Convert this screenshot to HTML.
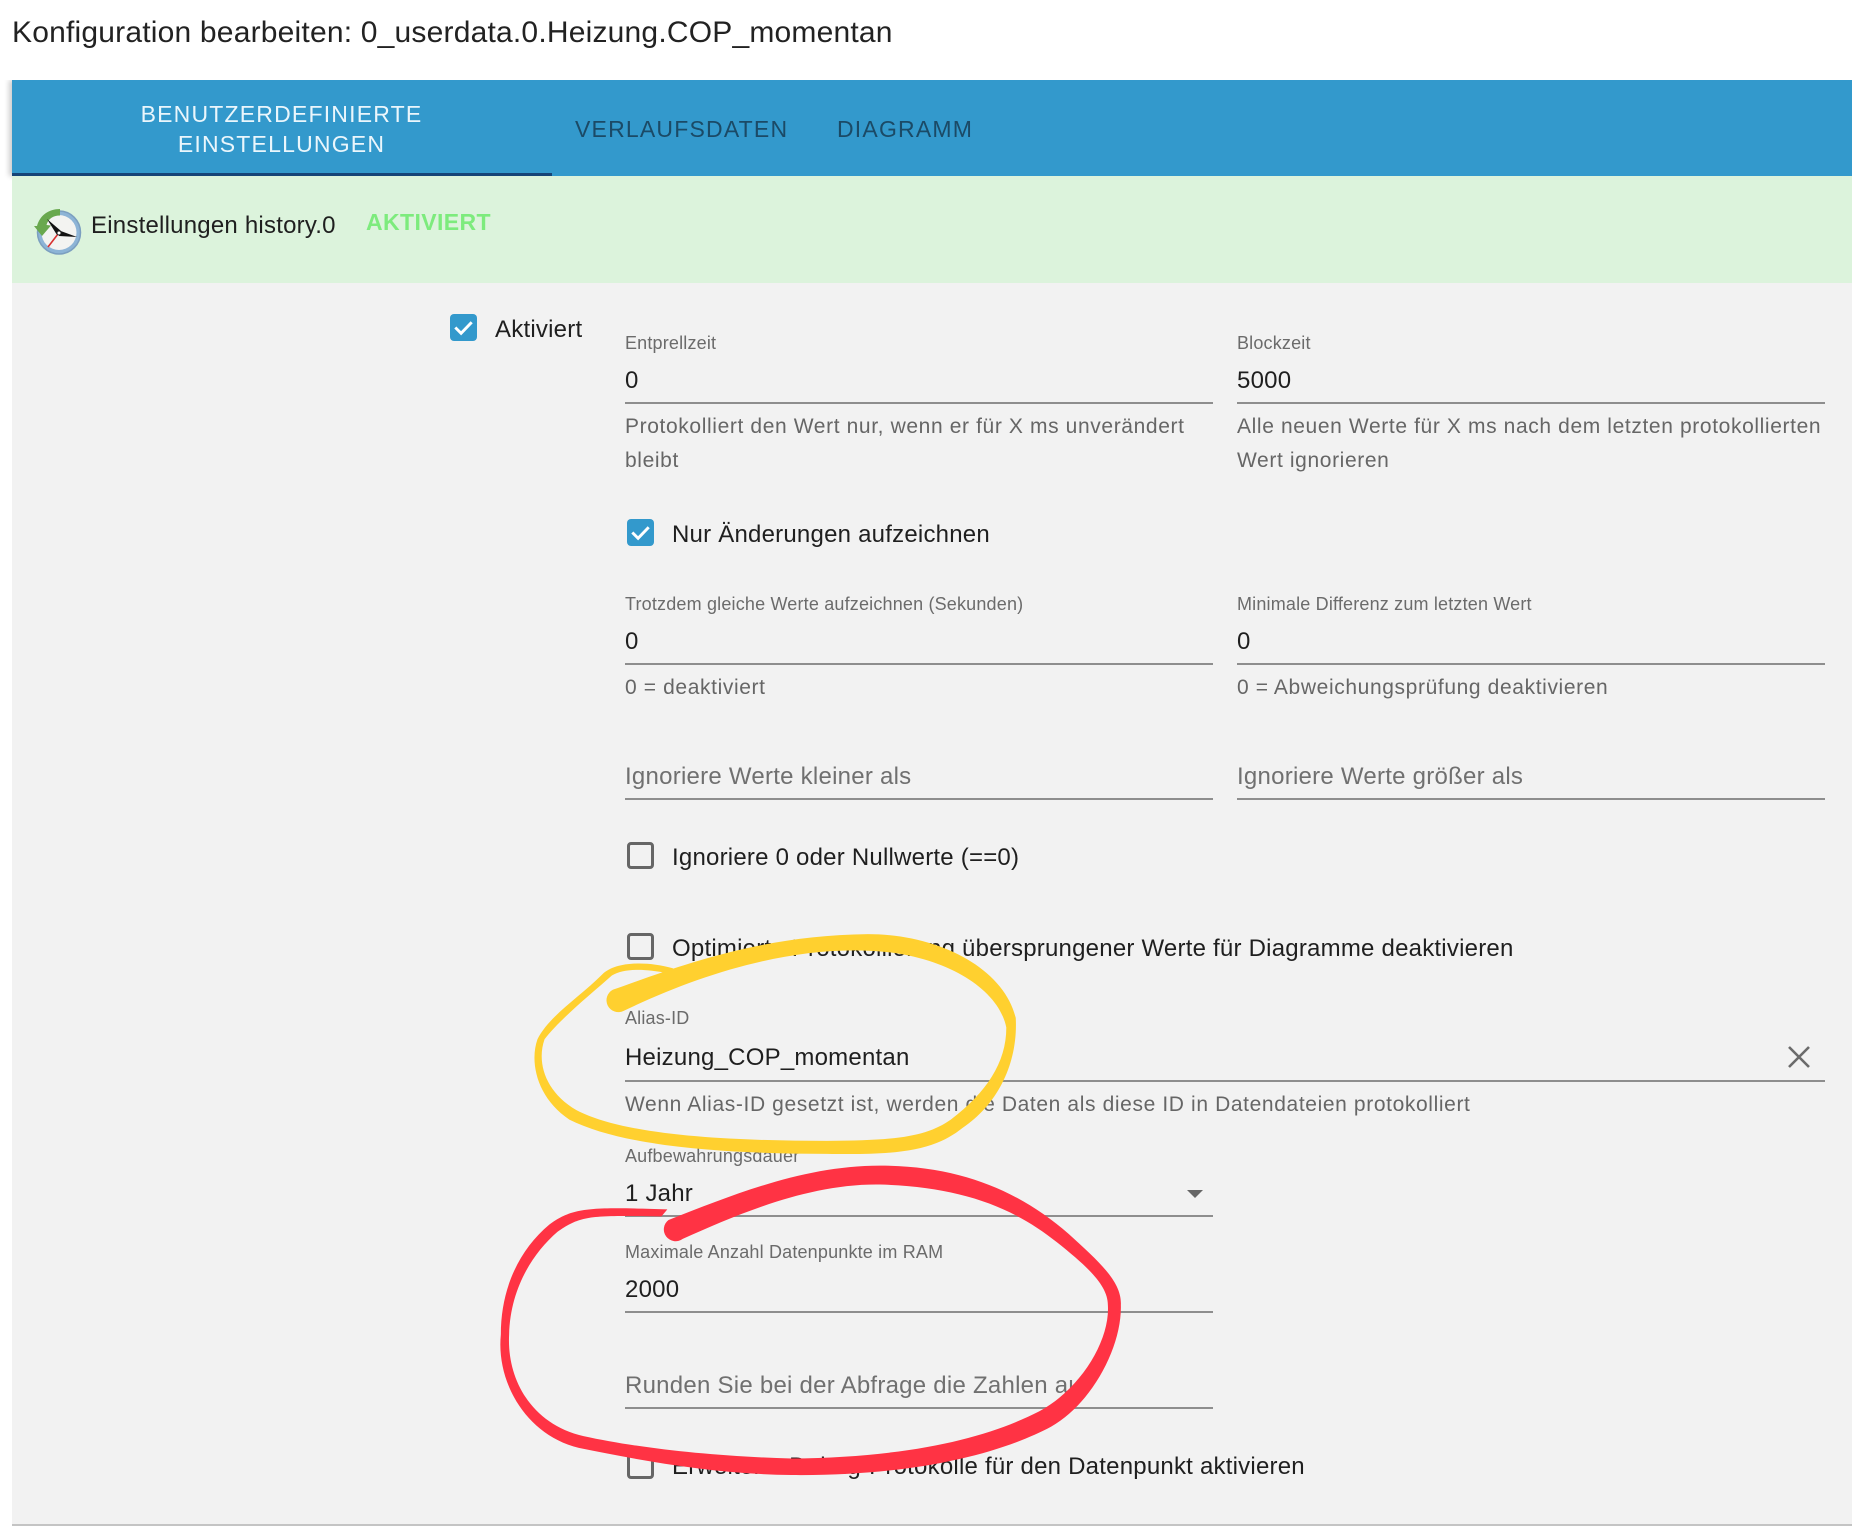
<!DOCTYPE html>
<html lang="de">
<head>
<meta charset="utf-8">
<title>Konfiguration bearbeiten</title>
<style>
html,body{margin:0;padding:0;background:#fff}
body{position:relative;width:1852px;height:1540px;overflow:hidden;font-family:"Liberation Sans",sans-serif;color:#222}
div{position:absolute}
.t{white-space:nowrap;line-height:1}
.v{font-size:24px;color:#1f1f1f;letter-spacing:.22px}
.l{font-size:18px;color:#6b6b6b;letter-spacing:.18px}
.h{font-size:21px;letter-spacing:.62px;color:#666}
.p{font-size:24px;color:#707070;letter-spacing:.25px}
.ln{height:2px;background:#8e8e8e}
.cb{width:27px;height:27px;background:#3399cc;border-radius:4px}
.ub{width:21px;height:21px;border:3px solid #666;border-radius:4px}
.tab{font-size:23px;letter-spacing:1.2px}
svg{position:absolute}
</style>
</head>
<body>
<div class="t" style="left:12px;top:18px;font-size:30px;letter-spacing:.2px;color:#222">Konfiguration bearbeiten: 0_userdata.0.Heizung.COP_momentan</div>

<div style="left:12px;top:80px;width:1840px;height:96px;background:#3399cc"></div>
<div style="left:12px;top:80px;width:540px;height:96px;box-shadow:-3px 0 5px rgba(0,0,0,.2);clip-path:inset(0 540px -5px -8px)"></div>
<div style="left:12px;top:173px;width:540px;height:3px;background:#164477"></div>
<div class="t tab" style="left:12px;width:539px;text-align:center;top:103px;color:#eaf6fc">BENUTZERDEFINIERTE</div>
<div class="t tab" style="left:12px;width:539px;text-align:center;top:133px;color:#eaf6fc">EINSTELLUNGEN</div>
<div class="t tab" style="left:575px;top:118px;color:#1b4a66">VERLAUFSDATEN</div>
<div class="t tab" style="left:837px;top:118px;color:#1b4a66">DIAGRAMM</div>

<div style="left:12px;top:176px;width:1840px;height:107px;background:#dcf3dc"></div>
<div style="left:12px;top:283px;width:1840px;height:1242px;background:#f2f2f2"></div>
<div style="left:12px;top:1524px;width:1840px;height:2px;background:#c4c4c4"></div>

<svg style="left:33px;top:206px" width="50" height="50" viewBox="0 0 50 50">
<circle cx="26" cy="26.500" r="21.500" fill="#8db4d6" stroke="#7c9fc0" stroke-width="1.500"/>
<circle cx="26" cy="26.500" r="17.500" fill="#f3f3f1"/>
<path d="M4 20 C7 9 16 3 27 3 L27 9.500 C20 9.500 15 13 13.500 19 L18 19.500 L9 30 L1 20 Z" fill="#69a84e"/>
<path d="M14 13 L28 25 L24 29 Z" fill="#111"/>
<path d="M25 24 L44 31 L26 30 Z" fill="#111"/>
<path d="M25 28 L15 41" stroke="#d83030" stroke-width="1.600"/>
<circle cx="26" cy="27" r="2" fill="#fff" stroke="#222"/>
</svg>
<div class="t v" style="left:91px;top:214px">Einstellungen history.0</div>
<div class="t" style="left:366px;top:211px;font-size:23px;font-weight:bold;color:#7deb7d;letter-spacing:.4px">AKTIVIERT</div>

<div class="cb" style="left:450px;top:314px"></div>
<svg style="left:450px;top:314px" width="27" height="27" viewBox="0 0 28 28"><path d="M5.500 14 L11.500 20 L22.500 8.500" fill="none" stroke="#fff" stroke-width="3"/></svg>
<div class="t v" style="left:495px;top:318px">Aktiviert</div>

<div class="t l" style="left:625px;top:334px">Entprellzeit</div>
<div class="t v" style="left:625px;top:369px">0</div>
<div class="ln" style="left:625px;top:402px;width:588px"></div>
<div class="t h" style="left:625px;top:416px">Protokolliert den Wert nur, wenn er für X ms unverändert</div>
<div class="t h" style="left:625px;top:450px">bleibt</div>

<div class="t l" style="left:1237px;top:334px">Blockzeit</div>
<div class="t v" style="left:1237px;top:369px">5000</div>
<div class="ln" style="left:1237px;top:402px;width:588px"></div>
<div class="t h" style="left:1237px;top:416px">Alle neuen Werte für X ms nach dem letzten protokollierten</div>
<div class="t h" style="left:1237px;top:450px">Wert ignorieren</div>

<div class="cb" style="left:627px;top:519px"></div>
<svg style="left:627px;top:519px" width="27" height="27" viewBox="0 0 28 28"><path d="M5.500 14 L11.500 20 L22.500 8.500" fill="none" stroke="#fff" stroke-width="3"/></svg>
<div class="t v" style="left:672px;top:523px">Nur Änderungen aufzeichnen</div>

<div class="t l" style="left:625px;top:595px">Trotzdem gleiche Werte aufzeichnen (Sekunden)</div>
<div class="t v" style="left:625px;top:630px">0</div>
<div class="ln" style="left:625px;top:663px;width:588px"></div>
<div class="t h" style="left:625px;top:677px">0 = deaktiviert</div>

<div class="t l" style="left:1237px;top:595px">Minimale Differenz zum letzten Wert</div>
<div class="t v" style="left:1237px;top:630px">0</div>
<div class="ln" style="left:1237px;top:663px;width:588px"></div>
<div class="t h" style="left:1237px;top:677px">0 = Abweichungsprüfung deaktivieren</div>

<div class="t p" style="left:625px;top:765px">Ignoriere Werte kleiner als</div>
<div class="ln" style="left:625px;top:798px;width:588px"></div>
<div class="t p" style="left:1237px;top:765px">Ignoriere Werte größer als</div>
<div class="ln" style="left:1237px;top:798px;width:588px"></div>

<div class="ub" style="left:627px;top:842px"></div>
<div class="t v" style="left:672px;top:846px">Ignoriere 0 oder Nullwerte (==0)</div>

<div class="ub" style="left:627px;top:933px"></div>
<div class="t v" style="left:672px;top:937px">Optimierte Protokollierung übersprungener Werte für Diagramme deaktivieren</div>

<div class="t l" style="left:625px;top:1009px">Alias-ID</div>
<div class="t v" style="left:625px;top:1046px">Heizung_COP_momentan</div>
<div class="ln" style="left:625px;top:1080px;width:1200px"></div>
<svg style="left:1786px;top:1044px" width="26" height="26" viewBox="0 0 26 26"><path d="M3 3 L23 23 M23 3 L3 23" stroke="#6b6b6b" stroke-width="2.600" fill="none"/></svg>
<div class="t h" style="left:625px;top:1094px">Wenn Alias-ID gesetzt ist, werden die Daten als diese ID in Datendateien protokolliert</div>

<div class="t l" style="left:625px;top:1147px">Aufbewahrungsdauer</div>
<div class="t v" style="left:625px;top:1182px">1 Jahr</div>
<div class="ln" style="left:625px;top:1215px;width:588px"></div>
<svg style="left:1187px;top:1190px" width="16" height="8" viewBox="0 0 16 8"><path d="M0 0 L16 0 L8 8 Z" fill="#666"/></svg>

<div class="t l" style="left:625px;top:1243px">Maximale Anzahl Datenpunkte im RAM</div>
<div class="t v" style="left:625px;top:1278px">2000</div>
<div class="ln" style="left:625px;top:1311px;width:588px"></div>

<div class="t p" style="left:625px;top:1374px">Runden Sie bei der Abfrage die Zahlen auf</div>
<div class="ln" style="left:625px;top:1407px;width:588px"></div>

<div class="ub" style="left:627px;top:1452px"></div>
<div class="t v" style="left:672px;top:1455px">Erweiterte Debug-Protokolle für den Datenpunkt aktivieren</div>

<svg style="left:0;top:0" width="1852" height="1540" viewBox="0 0 1568 1304">
<path fill="#ffd02f" d="M519 838 C570 820 640 792 735 791 C795 791 850 820 860 862 C862 900 845 935 815 955 C790 975 760 978 700 977 C620 977 530 972 482 948 C455 930 448 900 455 880 C465 860 490 845 510 825 C520 815 545 813 570 820 L565 824 C545 820 528 820 518 826 C500 842 475 862 461 880 C454 900 462 925 488 940 C530 962 620 966 700 966 C760 966 785 962 805 948 C835 925 852 900 852 870 C845 835 795 807 735 805 C665 802 590 826 528 856 A9 9 0 0 1 519 838 Z"/>
<path fill="#ff3344" d="M566 1033 C620 1012 680 987 745 987 C815 987 865 1010 905 1045 C930 1068 950 1085 949 1105 C950 1140 925 1188 890 1208 C845 1232 770 1250 670 1249 C600 1248 540 1236 490 1226 C445 1215 420 1170 424 1130 C424 1090 440 1058 465 1037 C485 1022 500 1022 565 1024 L560 1030 C500 1029 492 1029 472 1043 C450 1062 432 1092 431 1130 C429 1168 450 1206 494 1216 C540 1226 600 1233 670 1235 C770 1234 835 1218 880 1195 C915 1176 940 1135 938 1105 C938 1088 920 1072 895 1052 C855 1020 810 1005 745 1003 C685 1002 625 1028 578 1049 A9 9 0 0 1 566 1033 Z"/>
</svg>
</body>
</html>
